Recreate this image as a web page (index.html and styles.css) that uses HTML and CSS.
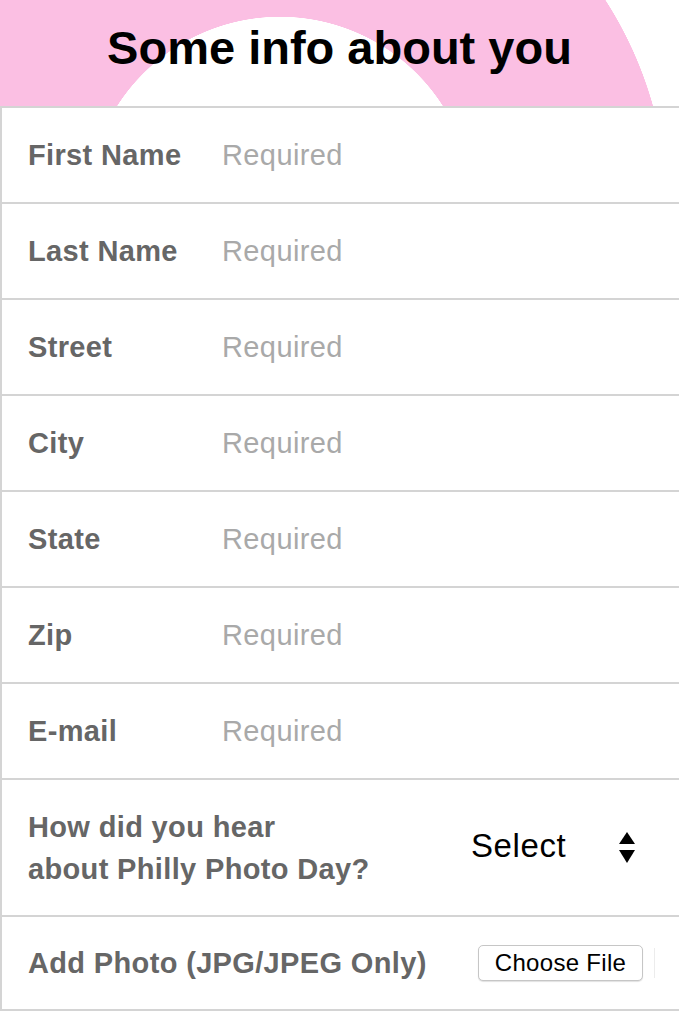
FILE: index.html
```html
<!DOCTYPE html>
<html lang="en">
<head>
<meta charset="utf-8">
<title>Some info about you</title>
<link rel="stylesheet" href="styles.css">
</head>
<body>
<header class="hero">
  <h1 class="hero-title">Some info about you</h1>
</header>
<form class="form">
  <div class="row">
    <label class="label" for="fn">First Name</label>
    <input class="field" id="fn" type="text" placeholder="Required">
  </div>
  <div class="row">
    <label class="label" for="ln">Last Name</label>
    <input class="field" id="ln" type="text" placeholder="Required">
  </div>
  <div class="row">
    <label class="label" for="st">Street</label>
    <input class="field" id="st" type="text" placeholder="Required">
  </div>
  <div class="row">
    <label class="label" for="ci">City</label>
    <input class="field" id="ci" type="text" placeholder="Required">
  </div>
  <div class="row">
    <label class="label" for="sa">State</label>
    <input class="field" id="sa" type="text" placeholder="Required">
  </div>
  <div class="row">
    <label class="label" for="zp">Zip</label>
    <input class="field" id="zp" type="text" placeholder="Required">
  </div>
  <div class="row">
    <label class="label" for="em">E-mail</label>
    <input class="field" id="em" type="text" placeholder="Required">
  </div>
  <div class="row row-tall">
    <label class="label label-wide" for="hear">How did you hear<br>about Philly Photo Day?</label>
    <div class="select-wrap">
      <select class="select" id="hear">
        <option>Select</option>
      </select>
      <svg class="arrows" width="16" height="31" viewBox="0 0 16 31" aria-hidden="true">
        <polygon points="8,0 16,12 0,12" fill="#000"/>
        <polygon points="0,18 16,18 8,31" fill="#000"/>
      </svg>
    </div>
  </div>
  <div class="row row-last">
    <label class="label label-file" for="photo">Add Photo (JPG/JPEG Only)</label>
    <button class="file-btn" type="button" id="photo">Choose File</button>
    <span class="file-edge"></span>
  </div>
</form>
</body>
</html>
```

FILE: styles.css
```css
* {
  box-sizing: border-box;
}

html, body {
  margin: 0;
  padding: 0;
  background: #fff;
}

body {
  width: 679px;
  font-family: "Liberation Sans", Arial, Helvetica, sans-serif;
  overflow: hidden;
}

.hero {
  height: 106px;
  padding-top: 25px;
  background: radial-gradient(circle at 280px 210px, #ffffff 0 193px, #fbbfe3 193.5px 387px, #ffffff 387.5px);
}

.hero-title {
  margin: 0;
  text-align: center;
  font-size: 47px;
  line-height: 46px;
  font-weight: 700;
  color: #000;
}

.form {
  margin: 0;
  border-left: 2px solid #d4d4d4;
}

.row {
  display: flex;
  align-items: center;
  height: 96px;
  border-top: 2px solid #d4d4d4;
}

.row-tall {
  height: 137px;
}

.row-last {
  border-bottom: 2px solid #d4d4d4;
  height: 96px;
}

.label {
  flex: 0 0 219px;
  padding-left: 26px;
  font-size: 29px;
  line-height: 42px;
  font-weight: 700;
  letter-spacing: 0.35px;
  color: #666;
}

.label-wide {
  flex-basis: 468px;
}

.label-file {
  flex-basis: 476px;
}

.field {
  flex: 1;
  border: none;
  outline: none;
  padding: 0 0 0 1px;
  margin: 0;
  font-family: "Liberation Sans", Arial, Helvetica, sans-serif;
  font-size: 29px;
  letter-spacing: 0.4px;
  color: #333;
  background: transparent;
}

.field::placeholder {
  color: #a9a9a9;
}

.select-wrap {
  display: flex;
  align-items: center;
}

.select {
  appearance: none;
  -webkit-appearance: none;
  border: none;
  outline: none;
  background: transparent;
  margin: 0 0 4px 0;
  padding: 0 0 0 1px;
  width: 149px;
  font-family: "Liberation Sans", Arial, Helvetica, sans-serif;
  font-size: 33px;
  letter-spacing: 0.6px;
  color: #000;
}

.arrows {
  display: block;
}

.file-btn {
  width: 165px;
  height: 36px;
  padding: 0;
  margin: 0;
  border: 1px solid #c6c6c6;
  border-radius: 5px;
  background: #fff;
  box-shadow: 0 1px 1px rgba(0, 0, 0, 0.12);
  font-family: "Liberation Sans", Arial, Helvetica, sans-serif;
  font-size: 24px;
  letter-spacing: 0.3px;
  color: #000;
}

.file-edge {
  width: 1px;
  height: 30px;
  margin-left: 11px;
  background: #ececec;
}
```
